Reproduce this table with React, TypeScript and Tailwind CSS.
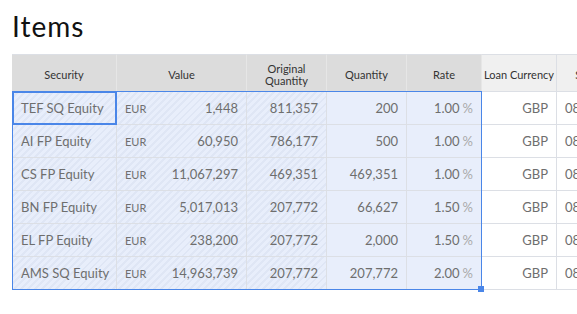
import React from "react";

type Row = {
  sec: string;
  val: string;
  orig: string;
  qty: string;
  rate: string;
};

const rows: Row[] = [
  { sec: "TEF SQ Equity", val: "1,448", orig: "811,357", qty: "200", rate: "1.00" },
  { sec: "AI FP Equity", val: "60,950", orig: "786,177", qty: "500", rate: "1.00" },
  { sec: "CS FP Equity", val: "11,067,297", orig: "469,351", qty: "469,351", rate: "1.00" },
  { sec: "BN FP Equity", val: "5,017,013", orig: "207,772", qty: "66,627", rate: "1.50" },
  { sec: "EL FP Equity", val: "238,200", orig: "207,772", qty: "2,000", rate: "1.50" },
  { sec: "AMS SQ Equity", val: "14,963,739", orig: "207,772", qty: "207,772", rate: "2.00" },
];

const stripe =
  "bg-[repeating-linear-gradient(135deg,#e8eefb_0px,#e8eefb_3px,#dfe6f5_3px,#dfe6f5_5px)]";
const sel = "bg-[#e8eefb]";
const cell = "border-r border-b border-[#dcdfe5] h-[33px] flex items-center pt-[2px]";

export default function App() {
  return (
    <div className="w-[577px] h-[314px] bg-white overflow-hidden font-['Lato','Liberation_Sans',sans-serif]">
      <div className="pl-[12px] pt-[9px] text-[28px] leading-[34px] tracking-[1px] text-[#111]">Items</div>
      <div className="relative ml-[12px] mt-[11px] w-[565px]">
        <div className="w-[565px] overflow-hidden">
          <div className="grid grid-cols-[105px_130px_80px_80px_75px_75px_90px] w-[635px]">
            {[
              ["Security", true],
              ["Value", true],
              ["Original\nQuantity", true],
              ["Quantity", true],
              ["Rate", true],
              ["Loan Currency", false],
              ["Settlement", false],
            ].map(([label, active], i) => (
              <div
                key={i}
                className={`h-[38px] pt-[4px] border-r border-b border-t border-[#dcdfe5] flex items-center justify-center text-center text-[11px] leading-[12px] whitespace-pre-line text-[#333] ${
                  active ? "bg-[#dcdcdc] border-r-[#e6e6e6]" : "bg-[#f0f0f0]"
                }`}
              >
                {label as string}
              </div>
            ))}
            {rows.map((r, i) => (
              <React.Fragment key={i}>
                <div className={`${cell} ${stripe} pl-[9px] text-[13px] text-[#6e6e6e]`}>{r.sec}</div>
                <div className={`${cell} ${stripe} justify-between pl-[8px] pr-[8px]`}>
                  <span className="text-[11px] text-[#707070]">EUR</span>
                  <span className="text-[13px] text-[#6e6e6e]">{r.val}</span>
                </div>
                <div className={`${cell} ${stripe} justify-end pr-[8px] text-[13px] text-[#6e6e6e]`}>{r.orig}</div>
                <div className={`${cell} ${sel} justify-end pr-[8px] text-[13px] text-[#6e6e6e]`}>{r.qty}</div>
                <div className={`${cell} ${sel} justify-end pr-[8px] text-[13px] text-[#6e6e6e]`}>
                  {r.rate}
                  <span className="ml-[3px] text-[#aaaaaa]">%</span>
                </div>
                <div className={`${cell} bg-white justify-end pr-[8px] text-[13px] text-[#6e6e6e]`}>GBP</div>
                <div className={`${cell} bg-white pl-[8px] text-[13px] text-[#6e6e6e]`}>08/01/2019</div>
              </React.Fragment>
            ))}
          </div>
        </div>
        <div className="absolute left-0 top-[37px] w-[470px] h-[199px] border border-[#4a86e8] pointer-events-none" />
        <div className="absolute left-0 top-[37px] w-[105px] h-[34px] border-2 border-[#4a86e8] pointer-events-none" />
        <div className="absolute left-[466px] top-[232px] w-[6px] h-[6px] bg-[#4a86e8]" />
      </div>
    </div>
  );
}
